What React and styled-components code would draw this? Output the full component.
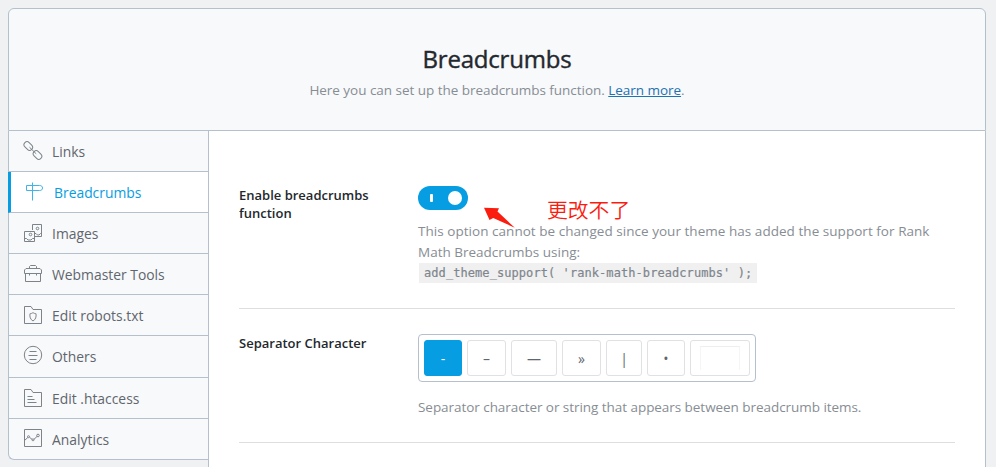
import React from "react";
import styled, { createGlobalStyle, css } from "styled-components";

const Global = createGlobalStyle`
  * { box-sizing: border-box; }
  html, body { margin: 0; height: 467px; overflow: hidden; background: #f0f1f3; }
  body { font-family: "Open Sans", "Noto Sans", "Noto Sans CJK SC", sans-serif; color: #23282d; }
`;

const Page = styled.div`
  height: 467px;
  overflow: hidden;
  padding: 8px 10px 0 8px;
`;

const Header = styled.header`
  height: 123px;
  border: 1px solid #b5c0cc;
  border-radius: 6px 6px 0 0;
  background: #f8f9fb;
  display: flex;
  flex-direction: column;
  align-items: center;
  padding-top: 33px;
`;

const Title = styled.h1`
  margin: 0;
  font-size: 24px;
  line-height: 34px;
  font-weight: 500;
  letter-spacing: -0.2px;
  -webkit-text-stroke: 0.4px #23282d;
  white-space: nowrap;
`;

const Subtitle = styled.p`
  margin: 4px 0 0;
  font-size: 13.5px;
  line-height: 20px;
  color: #878d94;
  white-space: nowrap;
  letter-spacing: -0.035px;
`;

const Link = styled.a`
  color: #2271b1;
  text-decoration: underline;
  text-underline-offset: 1px;
`;

const Main = styled.div`
  display: flex;
  align-items: flex-start;
`;

const Nav = styled.nav`
  width: 200px;
  flex: none;
  height: 329px;
  display: flex;
  flex-direction: column;
  border-left: 1px solid #b5c0cc;
  border-bottom: 1px solid #b5c0cc;
  border-radius: 0 0 0 6px;
  background: #f8f9fb;
`;

const NavItem = styled.div`
  height: ${(p) => p.$h || 41}px;
  flex: none;
  display: flex;
  align-items: center;
  gap: 9px;
  padding: 0 0 ${(p) => p.$lift || 0}px 14px;
  font-size: 15px;
  color: #5f666d;
  white-space: nowrap;
  border-bottom: 1px solid #b5c0cc;
  &:last-child { border-bottom: 0; }
  ${(p) => p.$active && css`
    margin: 0 -1px 0 -1px;
    padding-left: 13px;
    gap: 10px;
    border-left: 3px solid #069de3;
    background: #fff;
    color: #069de3;
  `}
`;

const NavIcon = styled.svg`
  width: 20px;
  height: 20px;
  flex: none;
  margin-bottom: ${(p) => (p.$raised ? 2 : 0)}px;
  fill: none;
  stroke: ${(p) => (p.$active ? "#3fb4e9" : "#7d8389")};
  stroke-width: 1;
`;

const NavText = styled.span`
  display: inline-block;
  transform: scaleX(0.925);
  transform-origin: left center;
`;

const Content = styled.main`
  flex: 1;
  height: 336px;
  background: #fff;
  border-left: 1px solid #b5c0cc;
  border-right: 1px solid #b5c0cc;
  padding: 0 30px;
`;

const Field = styled.section`
  display: flex;
  height: ${(p) => p.$h}px;
  padding-top: ${(p) => p.$top}px;
  border-bottom: 1px solid #dcdee0;
`;

const Label = styled.div`
  width: 179px;
  flex: none;
  font-size: 13px;
  line-height: 18px;
  font-weight: 600;
  white-space: pre-line;
`;

const Control = styled.div`
  flex: 1;
  min-width: 0;
`;

const Toggle = styled.div`
  width: 50px;
  height: 24px;
  border-radius: 12px;
  background: #069de3;
  display: flex;
  align-items: center;
  justify-content: space-between;
  padding: 0 6px 0 12px;
`;

const ToggleBar = styled.span`
  width: 3px;
  height: 8px;
  border-radius: 1px;
  background: #fff;
`;

const ToggleKnob = styled.span`
  width: 14px;
  height: 14px;
  border-radius: 50%;
  background: #fff;
`;

const Help = styled.div`
  margin-top: ${(p) => p.$mt}px;
  font-size: 13.5px;
  line-height: 21px;
  color: #878d94;
  white-space: nowrap;
`;

const Line = styled.div`
  letter-spacing: ${(p) => p.$ls || 0}px;
`;

const Code = styled.code`
  display: block;
  width: 338px;
  height: 20px;
  margin-left: 1px;
  padding: 0 5px;
  font: 12px/21px "DejaVu Sans Mono", monospace;
  letter-spacing: 0.07px;
  -webkit-text-stroke: 0.2px #7f868d;
  background: #f0f0f1;
  color: #7f868d;
`;

const Choices = styled.div`
  display: flex;
  gap: 5px;
  width: 338px;
  height: 48px;
  padding: 5px;
  border: 1px solid #b5c0cc;
  border-radius: 4px;
`;

const Choice = styled.div`
  width: ${(p) => p.$w}px;
  height: 36px;
  flex: none;
  display: flex;
  align-items: center;
  justify-content: center;
  font-size: 14px;
  border: 1px solid ${(p) => (p.$active ? "#069de3" : "#e0e1e3")};
  border-radius: 3px;
  background: ${(p) => (p.$active ? "#069de3" : "#fff")};
  color: ${(p) => (p.$active ? "#fff" : "#5f666d")};
`;

const CustomBox = styled.span`
  width: 40px;
  height: 24px;
  border: 1px solid #f5f5f6;
  border-top-color: #eeeeef;
  border-bottom: 0;
`;

const Arrow = styled.svg`
  position: absolute;
  left: 480px;
  top: 203px;
  width: 40px;
  height: 28px;
`;

const Note = styled.div`
  position: absolute;
  left: 547px;
  top: 199px;
  font: 350 20.8px/20px "Noto Sans CJK SC", sans-serif;
  color: #fb1c10;
  white-space: nowrap;
`;

const icons = {
  links: (
    <>
      <rect x="-4.8" y="-3" width="9.6" height="6" rx="3" transform="translate(5.300 5) rotate(45)" />
      <rect x="-4.8" y="-3" width="9.6" height="6" rx="3" transform="translate(14.500 14) rotate(45)" />
      <path d="M6.500 6.200 13.200 12.800" />
    </>
  ),
  crumbs: <path d="M8.500 .5v18M2.500 3.500h13c2 0 3 1 3 2.500s-1 2.500-3 2.500h-13z" />,
  images: (
    <>
      <path d="M9.500 7V1.500h9v12H12M1.500 8.500h10v10h-10zM1.500 15.500h2l1.500 1.500h3l1.500-1.500h2M12 10.500h1l1.500 1.500h1.500l1.500-1.500h1" />
      <circle cx="14.500" cy="5.500" r="1.300" />
      <circle cx="7.500" cy="11.500" r="1.300" />
    </>
  ),
  tools: <path d="M1.500 9.500v-3.500l1.500-1.500h14l1.500 1.500v3.500zM2.500 9.500v8h15v-8M6.500 4.500V2.500l1-1h5l1 1v2M6.500 9v2.500M13.500 9v2.500" />,
  robots: (
    <path d="M1.500 18.500V1.500h6.500l2 3h8.500v14zM10 7.500c1 1 2 1 3 1.200.5 3-.3 5.800-3 7.300-2.700-1.500-3.500-4.300-3-7.300 1-.2 2-.2 3-1.200z" />
  ),
  others: (
    <>
      <circle cx="10" cy="10" r="8.700" />
      <path d="M6.500 6.500h7M5.500 10.500h9M6.500 14.500h7" />
    </>
  ),
  htaccess: <path d="M1.500 18.500V1.500h6.500l2 3h8.500v14zM4.500 8.500h5M4.500 11.500h7M4.500 14.500h9" />,
  analytics: (
    <>
      <path d="M1.500 1.500h17v17h-17zM1.500 12.500 4.800 9.500M6.500 9.300l2.500 2M11 11.300l3.200-3" />
      <circle cx="5.500" cy="8.700" r="1" />
      <circle cx="10" cy="11.800" r="1" />
      <circle cx="15" cy="7.500" r="1.300" />
    </>
  ),
};

const items = [
  { id: "links", text: "Links" },
  { id: "crumbs", text: "Breadcrumbs", active: true },
  { id: "images", text: "Images" },
  { id: "tools", text: "Webmaster Tools" },
  { id: "robots", text: "Edit robots.txt" },
  { id: "others", text: "Others", h: 42, lift: 1, raised: true },
  { id: "htaccess", text: "Edit .htaccess" },
  { id: "analytics", text: "Analytics", lift: 1, raised: true },
];

const separators = [
  { c: "-", w: 38, active: true },
  { c: "–", w: 39 },
  { c: "—", w: 46 },
  { c: "»", w: 39 },
  { c: "|", w: 36 },
  { c: "•", w: 38 },
];

export default function App() {
  return (
    <Page>
      <Global />
      <Header>
        <Title>Breadcrumbs</Title>
        <Subtitle>
          Here you can set up the breadcrumbs function. <Link>Learn more</Link>.
        </Subtitle>
      </Header>
      <Main>
        <Nav>
          {items.map((it) => (
            <NavItem key={it.id} $active={it.active} $h={it.h} $lift={it.lift}>
              <NavIcon viewBox="0 0 20 20" $active={it.active} $raised={it.raised}>{icons[it.id]}</NavIcon>
              <NavText>{it.text}</NavText>
            </NavItem>
          ))}
        </Nav>
        <Content>
          <Field $h={178} $top={55}>
            <Label>{"Enable breadcrumbs\nfunction"}</Label>
            <Control>
              <Toggle>
                <ToggleBar />
                <ToggleKnob />
              </Toggle>
              <Help $mt={11}>
                <Line $ls={0.038}>This option cannot be changed since your theme has added the support for Rank</Line>
                <Line>Math Breadcrumbs using:</Line>
                <Code>add_theme_support( 'rank-math-breadcrumbs' );</Code>
              </Help>
            </Control>
          </Field>
          <Field $h={134} $top={25}>
            <Label>Separator Character</Label>
            <Control>
              <Choices>
                {separators.map((s) => (
                  <Choice key={s.c} $w={s.w} $active={s.active}>{s.c}</Choice>
                ))}
                <Choice $w={60}><CustomBox /></Choice>
              </Choices>
              <Help $mt={15}>
                <Line $ls={-0.05}>Separator character or string that appears between breadcrumb items.</Line>
              </Help>
            </Control>
          </Field>
        </Content>
      </Main>
      <Arrow viewBox="0 0 40 28">
        <path d="M4 4.700 19 5.300 17.500 8.500 34.800 24.800 13.200 15 9.500 17z" fill="#fb1c10" />
      </Arrow>
      <Note>更改不了</Note>
    </Page>
  );
}
